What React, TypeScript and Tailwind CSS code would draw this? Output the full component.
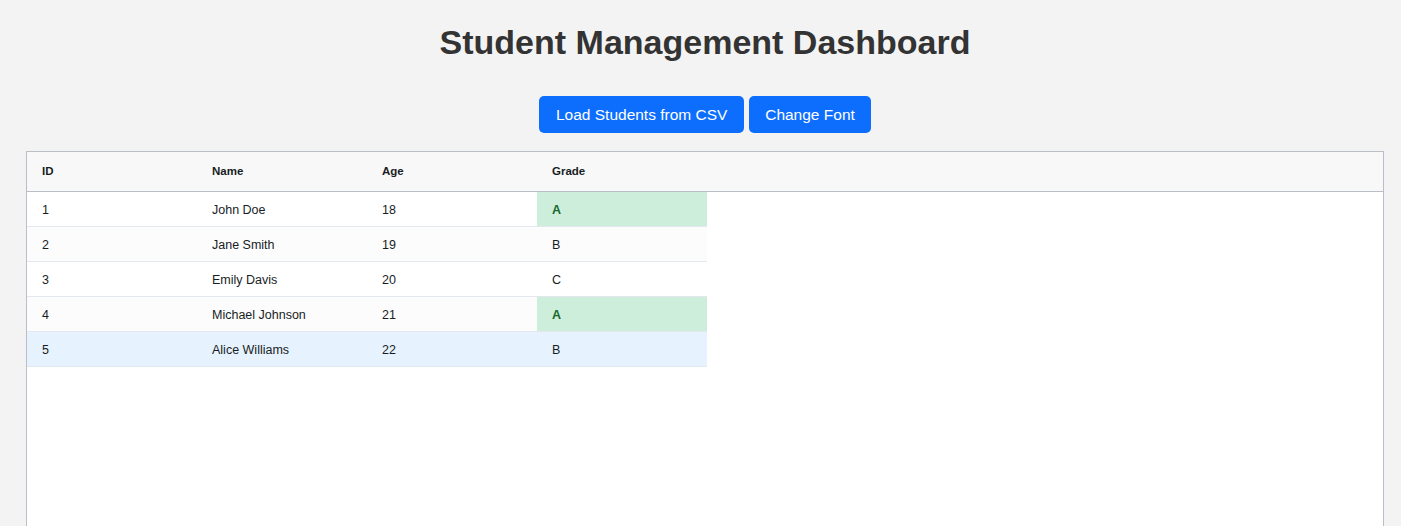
const students = [
  { id: 1, name: "John Doe", age: 18, grade: "A" },
  { id: 2, name: "Jane Smith", age: 19, grade: "B" },
  { id: 3, name: "Emily Davis", age: 20, grade: "C" },
  { id: 4, name: "Michael Johnson", age: 21, grade: "A" },
  { id: 5, name: "Alice Williams", age: 22, grade: "B" },
];

const columns = ["ID", "Name", "Age", "Grade"];

export default function App() {
  return (
    <div
      className="h-[526px] overflow-hidden bg-[#f3f3f3] pl-[26px] pr-[17px] pt-[22px]"
      style={{ fontFamily: '"Liberation Sans", Arial, sans-serif' }}
    >
      <h1 className="text-center text-[34px] leading-[40px] font-bold text-[#333333]">
        Student Management Dashboard
      </h1>

      <div className="mt-[34px] flex justify-center gap-[5px]">
        <button className="h-[37px] w-[205px] rounded-[5px] bg-[#0d6efd] text-white text-[15.5px]">
          Load Students from CSV
        </button>
        <button className="h-[37px] px-4 rounded-[5px] bg-[#0d6efd] text-white text-[15.5px]">
          Change Font
        </button>
      </div>

      {/* Grid */}
      <div className="mt-[18px] h-[420px] border border-[#babfc7] bg-white">
        <div className="flex h-[40px] items-center bg-[#f8f8f8] border-b border-[#babfc7] pt-px">
          {columns.map((col) => (
            <div
              key={col}
              className="w-[170px] px-[15px] text-[11.5px] font-bold text-[#181d1f]"
            >
              {col}
            </div>
          ))}
        </div>

        <div className="w-[680px]">
          {students.map((s, i) => (
            <div
              key={s.id}
              className={`flex h-[35px] border-b border-[#e3e7ee] text-[12.5px] text-[#181d1f] ${
                i === 4 ? "bg-[#e6f2fd]" : i % 2 === 1 ? "bg-[#fcfcfc]" : "bg-white"
              }`}
            >
              <div className="w-[170px] px-[15px] pt-[2px] flex items-center">{s.id}</div>
              <div className="w-[170px] px-[15px] pt-[2px] flex items-center">{s.name}</div>
              <div className="w-[170px] px-[15px] pt-[2px] flex items-center">{s.age}</div>
              <div
                className={`w-[170px] px-[15px] pt-[2px] flex items-center ${
                  s.grade === "A" ? "bg-[#cdeedb] font-bold text-[#17692c]" : ""
                }`}
              >
                {s.grade}
              </div>
            </div>
          ))}
        </div>
      </div>
    </div>
  );
}
